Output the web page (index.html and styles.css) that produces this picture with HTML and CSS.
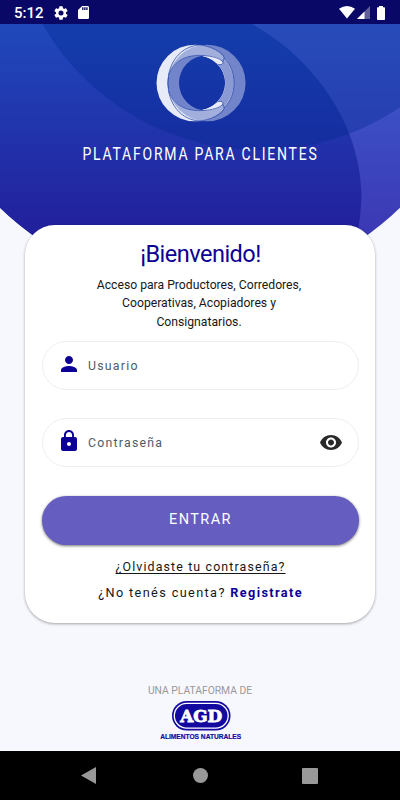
FILE: index.html
```
<!DOCTYPE html>
<html lang="es">
<head>
    <meta charset="UTF-8">
    <meta name="viewport" content="width=device-width, initial-scale=1.0">
    <title>Plataforma para Clientes</title>
    <link rel="stylesheet" href="styles.css">
</head>
<body>
    <div class="status-bar">
        <span class="clock">5:12</span>
        <svg class="gear" viewBox="2 2 20 20" width="14" height="14"><path fill="#fff" d="M19.14 12.94c.04-.3.06-.61.06-.94s-.02-.64-.07-.94l2.03-1.58a.5.5 0 0 0 .12-.61l-1.92-3.32a.49.49 0 0 0-.59-.22l-2.39.96a7 7 0 0 0-1.62-.94l-.36-2.54a.48.48 0 0 0-.48-.41h-3.84a.48.48 0 0 0-.47.41l-.36 2.54c-.59.24-1.13.57-1.62.94l-2.39-.96a.48.48 0 0 0-.59.22L2.74 8.87a.48.48 0 0 0 .12.61l2.03 1.58a6 6 0 0 0 0 1.88l-2.03 1.58a.5.5 0 0 0-.12.61l1.92 3.32c.12.22.37.29.59.22l2.39-.96c.5.38 1.03.7 1.62.94l.36 2.54c.05.24.24.41.48.41h3.84c.24 0 .44-.17.47-.41l.36-2.54a7 7 0 0 0 1.62-.94l2.39.96c.22.08.47 0 .59-.22l1.92-3.32a.48.48 0 0 0-.12-.61zM12 15.6a3.6 3.6 0 1 1 0-7.2 3.6 3.6 0 0 1 0 7.2z"/></svg>
        <svg class="sd" viewBox="4 2 16 20" width="11" height="13" preserveAspectRatio="none"><path fill="#fff" d="M18 2h-8L4.020 8 4 20c0 1.100.9 2 2 2h12c1.100 0 2-.9 2-2V4c0-1.100-.9-2-2-2zm-6 6h-2V4h2zm3 0h-2V4h2zm3 0h-2V4h2z"/></svg>
        <div class="status-right">
            <svg width="16" height="13" viewBox="0 0 16 13"><path fill="#fff" d="M0 2.700Q8-2.500 16 2.700L8 12.500z"/></svg>
            <svg width="13" height="13" viewBox="0 0 13 13"><path fill="#fff" fill-opacity=".35" d="M13 0v13H0z"/><path fill="#fff" d="M7.500 5.500V13H0z"/></svg>
            <svg class="battery" width="8" height="14" viewBox="0 0 8 14"><path fill="#fff" d="M2 0h4v1.300h1.200q.8 0 .8.800V13.200q0 .8-.8.800H.8q-.8 0-.8-.8V2.100q0-.8.800-.8H2z"/></svg>
        </div>
    </div>

    <main>
        <!-- fondo azul con circulos -->
        <svg class="fondo" width="400" height="265" viewBox="0 24 400 265">
            <defs>
                <linearGradient id="base" gradientUnits="userSpaceOnUse" x1="0" y1="24" x2="0" y2="235">
                    <stop offset="0" stop-color="#3c5fd0"/>
                    <stop offset="1" stop-color="#3c38b4"/>
                </linearGradient>
                <linearGradient id="frente" gradientUnits="userSpaceOnUse" x1="0" y1="24" x2="0" y2="235">
                    <stop offset="0" stop-color="#2049bc"/>
                    <stop offset="1" stop-color="#221f9b"/>
                </linearGradient>
                <clipPath id="borde"><circle cx="200" cy="2.500" r="286.500"/></clipPath>
            </defs>
            <g clip-path="url(#borde)">
                <rect y="24" width="400" height="265" fill="url(#base)"/>
                <path fill="url(#frente)" d="M0 24H252C320 62 361 130 361.500 195Q361 218 356 240V289H0z"/>
                <circle cx="260" cy="-101" r="251" fill="#002890" fill-opacity=".35"/>
            </g>
        </svg>

        <div class="cabecera">
            <svg class="logo" width="92" height="80" viewBox="155 43 92 80">
                <defs>
                    <clipPath id="anillo-der"><path clip-rule="evenodd" d="M168 83a38.800 38.300 0 1 1 77.600 0a38.800 38.300 0 1 1-77.600 0zM179 83a27.500 27.500 0 1 0 55 0a27.500 27.500 0 1 0-55 0z"/></clipPath>
                    <path id="anillo-izq" fill-rule="evenodd" d="M156.500 83a38.700 38.300 0 1 1 77.400 0a38.700 38.300 0 1 1-77.400 0zM167.500 83a28.800 27.700 0 1 0 57.600 0a28.800 27.700 0 1 0-57.600 0z"/>
                </defs>
                <path fill="#7385ca" fill-rule="evenodd" d="M168 83a38.800 38.300 0 1 1 77.600 0a38.800 38.300 0 1 1-77.600 0zM179 83a27.500 27.500 0 1 0 55 0a27.500 27.500 0 1 0-55 0z"/>
                <use href="#anillo-izq" fill="#e7eaf7"/>
                <use href="#anillo-izq" fill="#a2aedb" clip-path="url(#anillo-der)"/>
                <path fill="#8b9ad4" d="M223 59C237.500 73 237.500 93 223 107L217 102.500C228 91 228 75 217 63.500z"/>
                <path fill="#e7eaf7" d="M201 55.800C209 56 217 57 223 62Q223 65 218.500 64.500C214 60 208 57 201 55.800zM201 110.200C209 110 217 109 223 104Q223 101 218.500 101.500C214 106 208 109 201 110.200z"/>
                <g fill="none" stroke="#3450b0" stroke-width=".8">
                    <path d="M168.500 75C174 60 187 54.500 203 55.500C212 56 220 58 223 62Q223.500 65 218 64.700"/>
                    <path d="M168.500 91C174 106 187 111.500 203 110.500C212 110 220 108 223 104Q223.500 101 218 101.300"/>
                    <path d="M200 45C210 46 222 52 224 57Q224.500 60 222.500 62"/>
                    <path d="M200 121C210 120 222 114 224 109Q224.500 106 222.500 104"/>
                    <path d="M224 58C237.500 71 237.500 95 224 108"/>
                    <path d="M200 45C181 46 168 62 168 83S181 120 200 121"/>
                </g>
            </svg>
            <h1>PLATAFORMA PARA CLIENTES</h1>
        </div>

        <form class="card">
            <h2>¡Bienvenido!</h2>
            <p class="intro">Acceso para Productores, Corredores,<br>Cooperativas, Acopiadores y<br>Consignatarios.</p>

            <label class="campo">
                <svg width="16" height="16" viewBox="4 4 16 16"><path fill="#0d0096" d="M12 12c2.210 0 4-1.790 4-4s-1.790-4-4-4-4 1.790-4 4 1.790 4 4 4zm0 2c-2.670 0-8 1.340-8 4v2h16v-2c0-2.660-5.330-4-8-4z"/></svg>
                <input type="text" placeholder="Usuario">
            </label>

            <label class="campo clave">
                <svg width="16" height="21" viewBox="4 1 16 21"><path fill="#0d0096" d="M18 8h-1V6c0-2.760-2.240-5-5-5S7 3.240 7 6v2H6c-1.100 0-2 .9-2 2v10c0 1.100.9 2 2 2h12c1.100 0 2-.9 2-2V10c0-1.100-.9-2-2-2zm-6 9c-1.100 0-2-.9-2-2s.9-2 2-2 2 .9 2 2-.9 2-2 2zm3.100-9H8.900V6c0-1.710 1.390-3.100 3.100-3.100s3.100 1.390 3.100 3.100z"/></svg>
                <input type="password" placeholder="Contraseña">
                <svg class="ojo" width="22" height="15" viewBox="1 4.500 22 15"><path fill="#292929" d="M12 4.500C7 4.500 2.730 7.610 1 12c1.730 4.390 6 7.500 11 7.500s9.270-3.110 11-7.500c-1.730-4.390-6-7.500-11-7.500zM12 17c-2.760 0-5-2.240-5-5s2.240-5 5-5 5 2.240 5 5-2.240 5-5 5zm0-8c-1.660 0-3 1.340-3 3s1.340 3 3 3 3-1.340 3-3-1.340-3-3-3z"/></svg>
            </label>

            <button type="button">ENTRAR</button>
            <a class="olvido" href="#">¿Olvidaste tu contraseña?</a>
            <p class="registro">¿No tenés cuenta? <a href="#">Registrate</a></p>
        </form>

        <footer>
            <p>UNA PLATAFORMA DE</p>
            <svg width="100" height="46" viewBox="0 0 100 46">
                <rect x="22" y="1" width="58.500" height="29.500" rx="14.700" fill="#1309a0"/>
                <rect x="24.300" y="3.300" width="53.900" height="24.900" rx="12.400" fill="none" stroke="#fff" stroke-width="1.300"/>
                <text x="51.200" y="21.500" text-anchor="middle" textLength="42" lengthAdjust="spacingAndGlyphs" class="agd">AGD</text>
                <text x="50.700" y="39.200" text-anchor="middle" textLength="81" lengthAdjust="spacingAndGlyphs" class="lema">ALIMENTOS NATURALES</text>
            </svg>
        </footer>
    </main>

    <div class="nav-bar">
        <svg width="15" height="17" viewBox="0 0 15 17"><path fill="#999" d="M15 0v17L0 8.500z"/></svg>
        <span class="home"></span>
        <span class="recientes"></span>
    </div>
</body>
</html>
```

FILE: styles.css
```
* {
    box-sizing: border-box;
}
body {
    margin: 0;
    height: 800px;
    display: flex;
    flex-direction: column;
    font-family: Roboto, sans-serif;
    background-color: #f7f8fe;
    color: #171717;
    overflow: hidden;
}
h1, h2, p {
    margin: 0;
    font-weight: 400;
}
svg {
    display: block;
    flex: none;
}

/* barra de estado */
.status-bar {
    height: 24px;
    flex: none;
    display: flex;
    align-items: center;
    padding: 1px 15px 0 14px;
    background-color: #0a0866;
    color: #fff;
}
.clock {
    width: 40px;
    font-size: 15px;
    font-weight: 500;
}
.sd {
    margin-left: 10px;
}
.status-right {
    display: flex;
    align-items: center;
    gap: 2px;
    margin-left: auto;
}
.battery {
    margin-left: 5px;
}

main {
    position: relative;
    flex: 1;
    display: flex;
    flex-direction: column;
    align-items: center;
}
.fondo {
    position: absolute;
    top: 0;
    left: 0;
    z-index: -1;
}
.cabecera {
    height: 201px;
    padding-top: 19px;
    display: flex;
    flex-direction: column;
    align-items: center;
}
.logo {
    margin-left: 2px;
}
h1 {
    margin-top: 21px;
    color: #fff;
    font-size: 17.5px;
    line-height: 20px;
    letter-spacing: 2.2px;
    white-space: nowrap;
    transform: scaleX(0.8);
}

/* tarjeta de ingreso */
.card {
    width: 350px;
    height: 398px;
    padding: 15px 16px 0 17px;
    border-radius: 30px;
    background-color: #fff;
    box-shadow: 0 1px 3px rgba(0, 0, 0, 0.35);
    text-align: center;
}
h2 {
    color: #0d0096;
    font-size: 23.5px;
    line-height: 28px;
    letter-spacing: -0.5px;
}
.intro {
    margin: 8px 3px 0 0;
    font-size: 12.2px;
    line-height: 18.3px;
}
.campo {
    display: flex;
    align-items: center;
    height: 49px;
    margin-top: 10px;
    padding: 0 16px 3px 18px;
    border: 1px solid #eee;
    border-radius: 25px;
}
.clave {
    margin-top: 28px;
}
.campo input {
    flex: 1;
    min-width: 0;
    margin-left: 11px;
    padding: 4px 0 0;
    border: none;
    outline: none;
    background: none;
    font-family: inherit;
    font-size: 12.3px;
    letter-spacing: 1.25px;
}
.campo input::placeholder {
    color: #4e5b6a;
    opacity: 1;
}
.ojo {
    margin-top: 3px;
}
button {
    display: block;
    width: 100%;
    height: 49px;
    margin-top: 29px;
    padding: 0 0 2px;
    border: none;
    border-radius: 25px;
    background-color: #655dbf;
    box-shadow: 0 1px 3px rgba(0, 0, 0, 0.55);
    color: #fff;
    font-family: inherit;
    font-size: 14.5px;
    letter-spacing: 1.4px;
}
.olvido {
    display: block;
    margin-top: 13px;
    color: #171717;
    font-size: 12.4px;
    line-height: 18px;
    letter-spacing: 1.13px;
    text-decoration-thickness: 1px;
    text-underline-offset: 2px;
}
.registro {
    margin-top: 8px;
    font-size: 12.7px;
    line-height: 18px;
    letter-spacing: 1.38px;
}
.registro a {
    color: #0d0096;
    font-weight: 700;
    text-decoration: none;
}

footer {
    margin-top: 61px;
    display: flex;
    flex-direction: column;
    align-items: center;
}
footer p {
    margin-bottom: 2px;
    color: #999;
    font-size: 10.3px;
    line-height: 14px;
}
.agd {
    font: 700 16px "DejaVu Serif", serif;
    fill: #fff;
    stroke: #fff;
    stroke-width: 0.8px;
}
.lema {
    font: 700 7.3px "Liberation Sans", sans-serif;
    fill: #1309a0;
    stroke: #1309a0;
    stroke-width: 0.2px;
}

/* barra de navegacion */
.nav-bar {
    height: 49px;
    flex: none;
    display: grid;
    grid-template-columns: repeat(3, 110px);
    justify-content: center;
    justify-items: center;
    align-items: center;
    background-color: #000;
}
.nav-bar svg {
    margin-right: 3px;
}
.home {
    width: 15px;
    height: 15px;
    border-radius: 50%;
    background-color: #999;
}
.recientes {
    width: 16px;
    height: 16px;
    border-radius: 1px;
    background-color: #999;
}
```
